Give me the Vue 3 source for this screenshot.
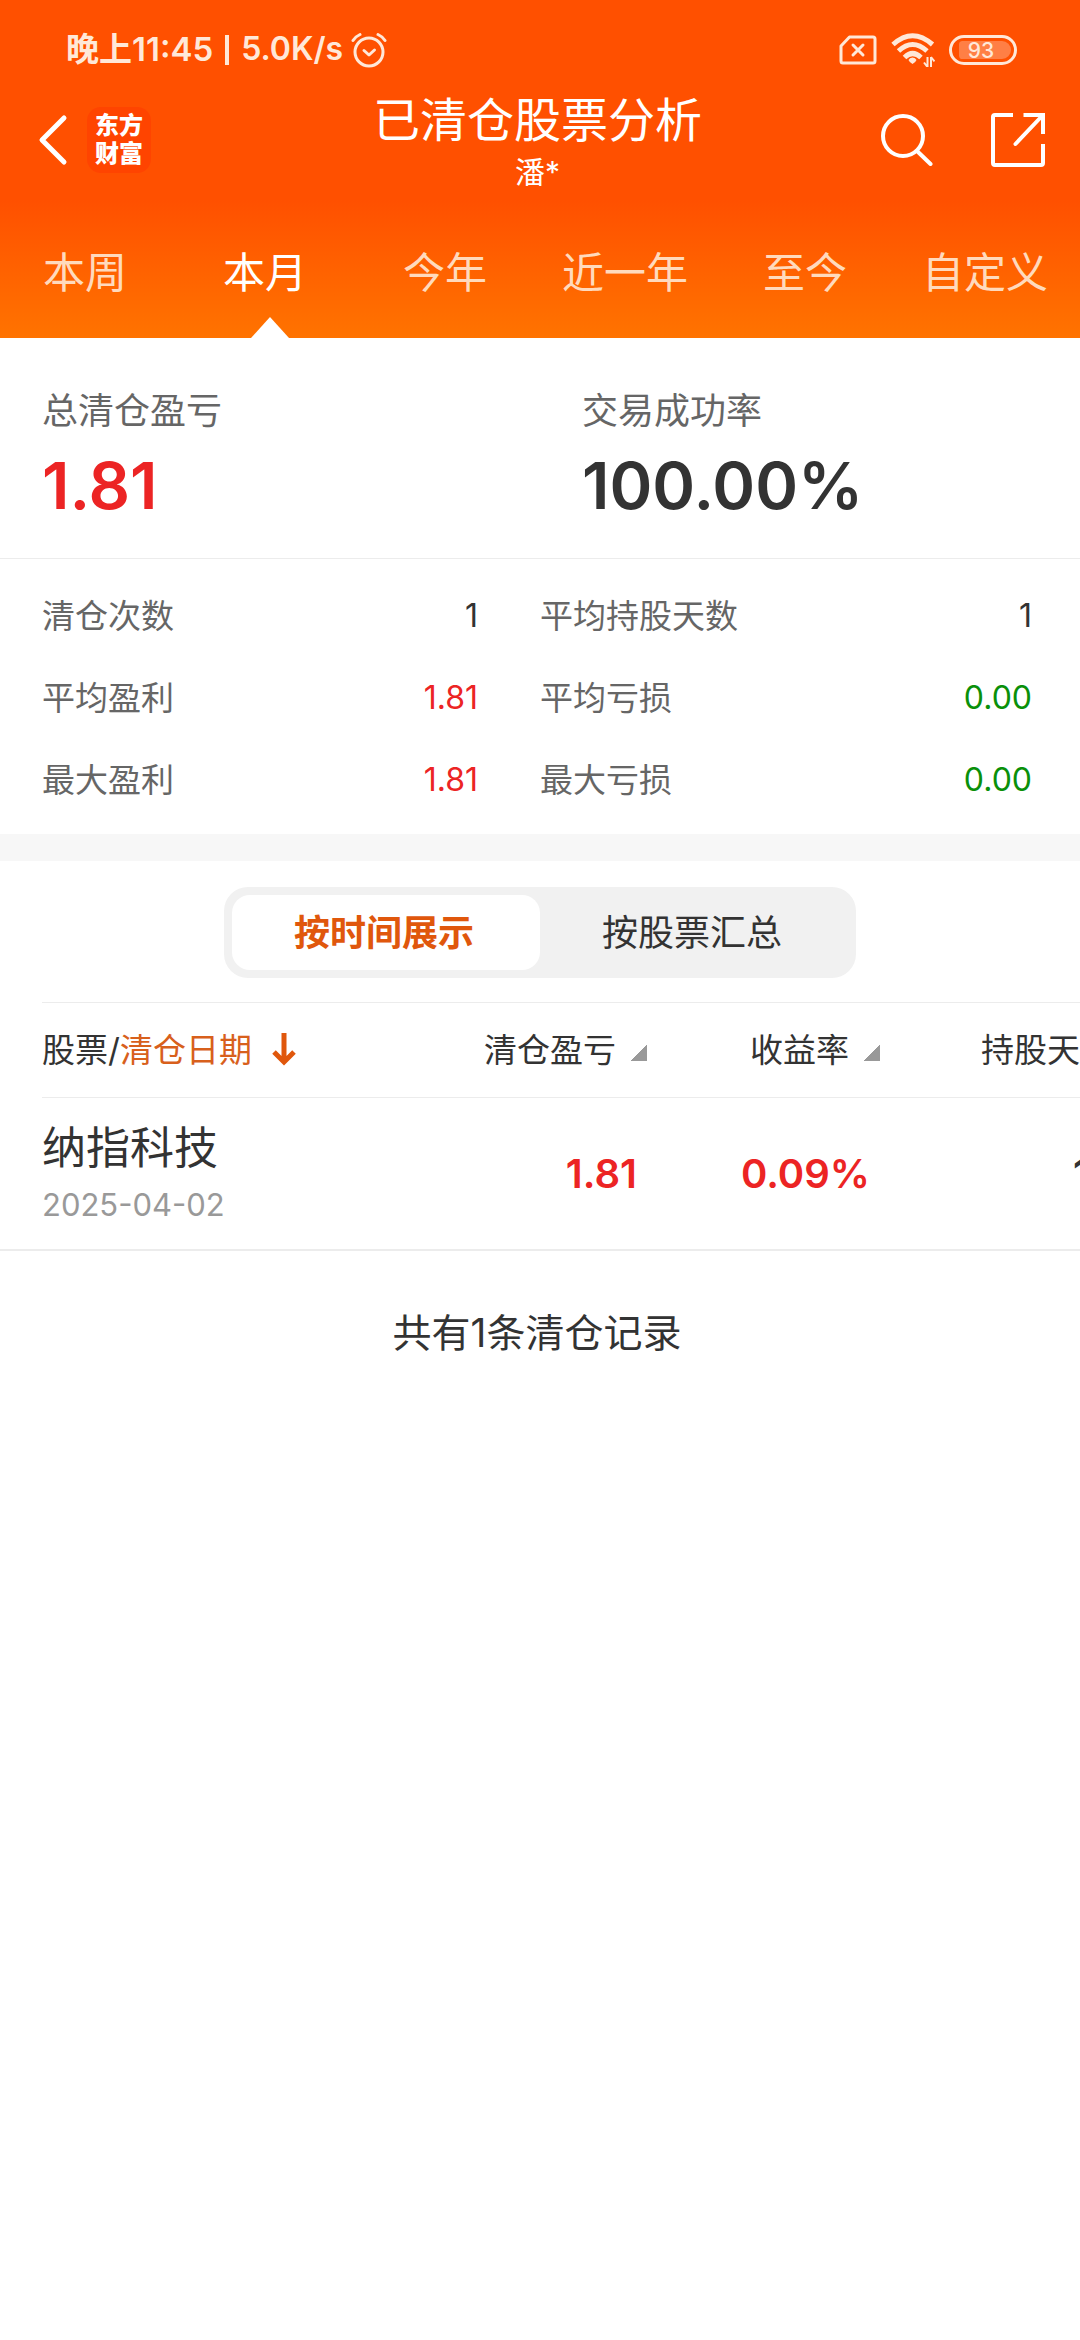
<script setup>
import { ref } from 'vue'

const periods = ['本周', '本月', '今年', '近一年', '至今', '自定义']
const activePeriod = ref('本月')

const stats = [
  { label: '清仓次数', value: '1', tone: 'plain' },
  { label: '平均持股天数', value: '1', tone: 'plain' },
  { label: '平均盈利', value: '1.81', tone: 'gain' },
  { label: '平均亏损', value: '0.00', tone: 'loss' },
  { label: '最大盈利', value: '1.81', tone: 'gain' },
  { label: '最大亏损', value: '0.00', tone: 'loss' }
]

const views = ['按时间展示', '按股票汇总']
const activeView = ref('按时间展示')

const records = [
  { name: '纳指科技', date: '2025-04-02', profit: '1.81', rate: '0.09%', days: '1' }
]
</script>

<template>
  <div class="page">
    <header class="top">
      <div class="status">
        <span class="clock">晚上11:45</span>
        <span class="bar"></span>
        <span class="speed">5.0K/s</span>
        <svg class="alarm" width="36" height="36" viewBox="0 0 36 36" fill="none" stroke="currentColor" stroke-width="3" stroke-linecap="round">
          <circle cx="18" cy="20" r="14" />
          <path d="M2 8.500Q4.500 4.500 9 2.500M34 8.500Q31.500 4.500 27 2.500" />
          <path d="M13 18.500l5 4.500 5.500-5" stroke-linejoin="round" />
        </svg>
        <span class="spacer"></span>
        <svg class="sim" width="38" height="30" viewBox="0 0 38 30" fill="none" stroke="currentColor" stroke-width="3" stroke-linejoin="round">
          <path d="M10.500 2H34q2 0 2 2v22q0 2-2 2H4q-2 0-2-2V11z" />
          <path d="M14 10l10 10M24 10l-10 10" stroke-linecap="round" />
        </svg>
        <svg class="wifi" width="44" height="34" viewBox="0 0 44 34">
          <g fill="none" stroke="currentColor" stroke-width="5">
            <path d="M2 11.500Q21.500-6 41.500 11.500" />
            <path d="M7.500 18Q21.500 5 36 18" />
            <path d="M13.500 24.500Q21.500 16.500 30 24.500" />
          </g>
          <path d="M21.500 24.500q3 0 4 2.500-1 2.500-4 4-3-1.500-4-4 1-2.500 4-2.500z" fill="currentColor" />
          <path d="M36.500 24v10M40 34V24M36.500 34l-3.500-4.500M40 24l3.500 4.500" fill="none" stroke="currentColor" stroke-width="2" />
        </svg>
        <span class="battery"><span class="charge">93</span></span>
      </div>

      <div class="nav">
        <button class="icon-btn back" type="button" aria-label="返回">
          <svg width="30" height="52" viewBox="0 0 30 52" fill="none" stroke="currentColor" stroke-width="5" stroke-linecap="round" stroke-linejoin="round">
            <path d="M26 4L4 26l22 22" />
          </svg>
        </button>
        <span class="logo">东方<br>财富</span>
        <div class="heading">
          <h1>已清仓股票分析</h1>
          <p>潘*</p>
        </div>
        <button class="icon-btn search" type="button" aria-label="搜索">
          <svg width="52" height="52" viewBox="0 0 52 52" fill="none" stroke="currentColor" stroke-width="4" stroke-linecap="round">
            <circle cx="22" cy="22" r="20" />
            <path d="M36 37l13.500 13" />
          </svg>
        </button>
        <button class="icon-btn share" type="button" aria-label="分享">
          <svg width="56" height="56" viewBox="0 0 56 56" fill="none" stroke="currentColor" stroke-width="4">
            <path d="M23 3H5Q3 3 3 5v46q0 2 2 2h46q2 0 2-2V32" />
            <path d="M33.500 3H53v19" />
            <path d="M52 4L25.500 32" stroke-linecap="round" />
          </svg>
        </button>
      </div>

      <nav class="tabs">
        <button
          v-for="period in periods"
          :key="period"
          type="button"
          class="tab"
          :class="{ active: period === activePeriod }"
          @click="activePeriod = period"
        >{{ period }}</button>
      </nav>
    </header>

    <section class="summary">
      <div class="total">
        <p class="total-label">总清仓盈亏</p>
        <p class="total-value gain">1.81</p>
      </div>
      <div class="total">
        <p class="total-label">交易成功率</p>
        <p class="total-value">100.00%</p>
      </div>
    </section>

    <dl class="stats">
      <div v-for="stat in stats" :key="stat.label" class="stat">
        <dt>{{ stat.label }}</dt>
        <dd :class="stat.tone">{{ stat.value }}</dd>
      </div>
    </dl>

    <section class="records">
      <div class="switch">
        <button
          v-for="view in views"
          :key="view"
          type="button"
          :class="{ active: view === activeView }"
          @click="activeView = view"
        >{{ view }}</button>
      </div>

      <div class="scroller">
        <table>
          <colgroup>
            <col class="col-stock">
            <col class="col-profit">
            <col class="col-rate">
            <col class="col-days">
          </colgroup>
          <thead>
            <tr>
              <th scope="col" class="stock">
                <button type="button" class="sort">
                  <span>股票/<em>清仓日期</em></span>
                  <svg class="arrow" width="24" height="34" viewBox="0 0 24 34" fill="none" stroke="currentColor" stroke-width="5">
                    <path d="M12 0v29M2 19l10 10 10-10" />
                  </svg>
                </button>
              </th>
              <th scope="col"><button type="button" class="sort">清仓盈亏<i class="corner"></i></button></th>
              <th scope="col"><button type="button" class="sort">收益率<i class="corner"></i></button></th>
              <th scope="col"><button type="button" class="sort">持股天数<i class="corner"></i></button></th>
            </tr>
          </thead>
          <tbody>
            <tr v-for="record in records" :key="record.name">
              <td class="stock">
                <span class="name">{{ record.name }}</span>
                <span class="date">{{ record.date }}</span>
              </td>
              <td class="figure gain">{{ record.profit }}</td>
              <td class="figure gain">{{ record.rate }}</td>
              <td class="figure days">{{ record.days }}</td>
            </tr>
          </tbody>
        </table>
      </div>

      <p class="count">共有1条清仓记录</p>
    </section>
  </div>
</template>

<style>
body {
  background: #fff;
}
</style>

<style scoped>
.page {
  color: #333;
  font-family: Inter, "Noto Sans CJK SC", sans-serif;
  font-size: 33px;
  overflow: hidden;
}

h1, p, dl, dd {
  margin: 0;
}

button {
  padding: 0;
  border: 0;
  background: none;
  color: inherit;
  font: inherit;
  cursor: pointer;
}

svg {
  display: block;
  flex: none;
}

.gain { color: #ec2424; }
.loss { color: #0a900a; }

.top {
  background: linear-gradient(#ff5000 200px, #ff7300);
  color: #fff;
}

.status {
  display: flex;
  align-items: center;
  height: 100px;
  padding: 0 63px 0 66px;
  color: #ffe8d8;
  font-weight: 600;
  font-size: 33px;
}

.clock, .speed { line-height: 48px; padding-bottom: 2px; }

.bar {
  width: 4px;
  height: 30px;
  margin: 0 12px;
  background: currentColor;
}

.speed { font-size: 32px; }
.alarm { margin-left: 8px; }
.spacer { flex: 1; }
.wifi { margin: 0 14px 0 14px; }

.battery {
  display: flex;
  box-sizing: border-box;
  width: 68px;
  height: 30px;
  padding: 3px 3px 3px 7px;
  border: 3px solid currentColor;
  border-radius: 15px;
}

.charge {
  flex: 1;
  padding-right: 8px;
  border-radius: 4px 10px 10px 4px;
  background: #ff7f45;
  font-weight: 500;
  font-size: 21px;
  line-height: 19px;
  text-align: center;
}

.nav {
  display: flex;
  align-items: flex-start;
  height: 104px;
  padding: 0 34px 0 38px;
}

.icon-btn { margin-top: 14px; }

.logo {
  box-sizing: border-box;
  width: 64px;
  height: 66px;
  margin: 7px 0 0 19px;
  padding: 5px 0;
  border-radius: 14px;
  background: #ff4400;
  font-weight: 900;
  font-size: 24px;
  line-height: 28px;
  text-align: center;
}

.heading {
  flex: 1;
  padding-left: 43px;
  text-align: center;
}

h1 {
  margin-top: -10px;
  font-weight: 400;
  font-size: 47px;
  line-height: 60px;
}

.heading p {
  font-size: 30px;
  line-height: 44px;
}

.share { margin: 12px 0 0 57px; }

.tabs {
  display: grid;
  grid-template-columns: repeat(6, 1fr);
  height: 134px;
}

.tab {
  position: relative;
  padding: 0 10px 4px 0;
  color: #ffdabd;
  font-size: 42px;
}

.tab.active { color: #fff; }

.tab.active::after {
  content: "";
  position: absolute;
  bottom: 0;
  left: 50%;
  margin-left: -19px;
  border: 19px solid transparent;
  border-top: 0;
  border-bottom: 21px solid #fff;
}

.summary {
  display: grid;
  grid-template-columns: 1fr 1fr;
  padding: 46px 0 24px;
  border-bottom: 1px solid #ececec;
}

.total { padding-left: 42px; }

.total-label {
  color: #666;
  font-size: 36px;
  line-height: 54px;
}

.total-value {
  font-weight: 600;
  font-size: 65px;
  line-height: 96px;
}

.stats {
  display: grid;
  grid-template-columns: 436fr 492fr;
  column-gap: 62px;
  padding: 16px 48px 13px 42px;
  border-bottom: 27px solid #f7f7f7;
}

.stat {
  display: flex;
  justify-content: space-between;
  line-height: 82px;
}

dt { color: #666; }
dd { font-size: 32px; }

.records { padding-top: 26px; }

.switch {
  display: grid;
  grid-template-columns: 1fr 1fr;
  width: 616px;
  margin: 0 auto 24px;
  padding: 8px;
  border-radius: 24px;
  background: #f1f1f1;
}

.switch button {
  padding: 2px 4px 0 0;
  border-radius: 18px;
  font-size: 36px;
  line-height: 73px;
}

.switch .active {
  background: #fff;
  color: #e0570c;
  font-weight: 700;
}

.scroller {
  overflow: hidden;
  border-bottom: 2px solid #ececec;
}

table {
  width: 1156px;
  margin-left: 42px;
  border-collapse: collapse;
  table-layout: fixed;
}

.col-stock { width: 372px; }
.col-profit { width: 233px; }
.col-rate { width: 233px; }

thead tr {
  height: 95px;
  border-top: 1px solid #ececec;
  border-bottom: 1px solid #ececec;
}

th, td {
  padding: 0;
  text-align: right;
}

th { font-weight: 400; }

.stock { text-align: left; }

.sort {
  display: inline-flex;
  align-items: center;
  line-height: 48px;
  white-space: nowrap;
}

em {
  color: #d8601c;
  font-style: normal;
}

.arrow {
  margin-left: 20px;
  color: #e0570c;
}

.corner {
  width: 16px;
  height: 16px;
  margin: 6px 0 0 15px;
  background: linear-gradient(135deg, transparent 50%, #999 50%);
}

th:last-child { padding-right: 54px; }

tbody tr { height: 151px; }

.name, .date { display: block; }

.name {
  font-size: 44px;
  line-height: 64px;
}

.date {
  color: #999;
  font-size: 31px;
  line-height: 50px;
}

.figure {
  padding-right: 10px;
  font-weight: 600;
  font-size: 40px;
}

.days { padding-right: 108px; }

.count {
  margin-top: 54px;
  padding-right: 6px;
  font-size: 39px;
  line-height: 56px;
  text-align: center;
}
</style>
